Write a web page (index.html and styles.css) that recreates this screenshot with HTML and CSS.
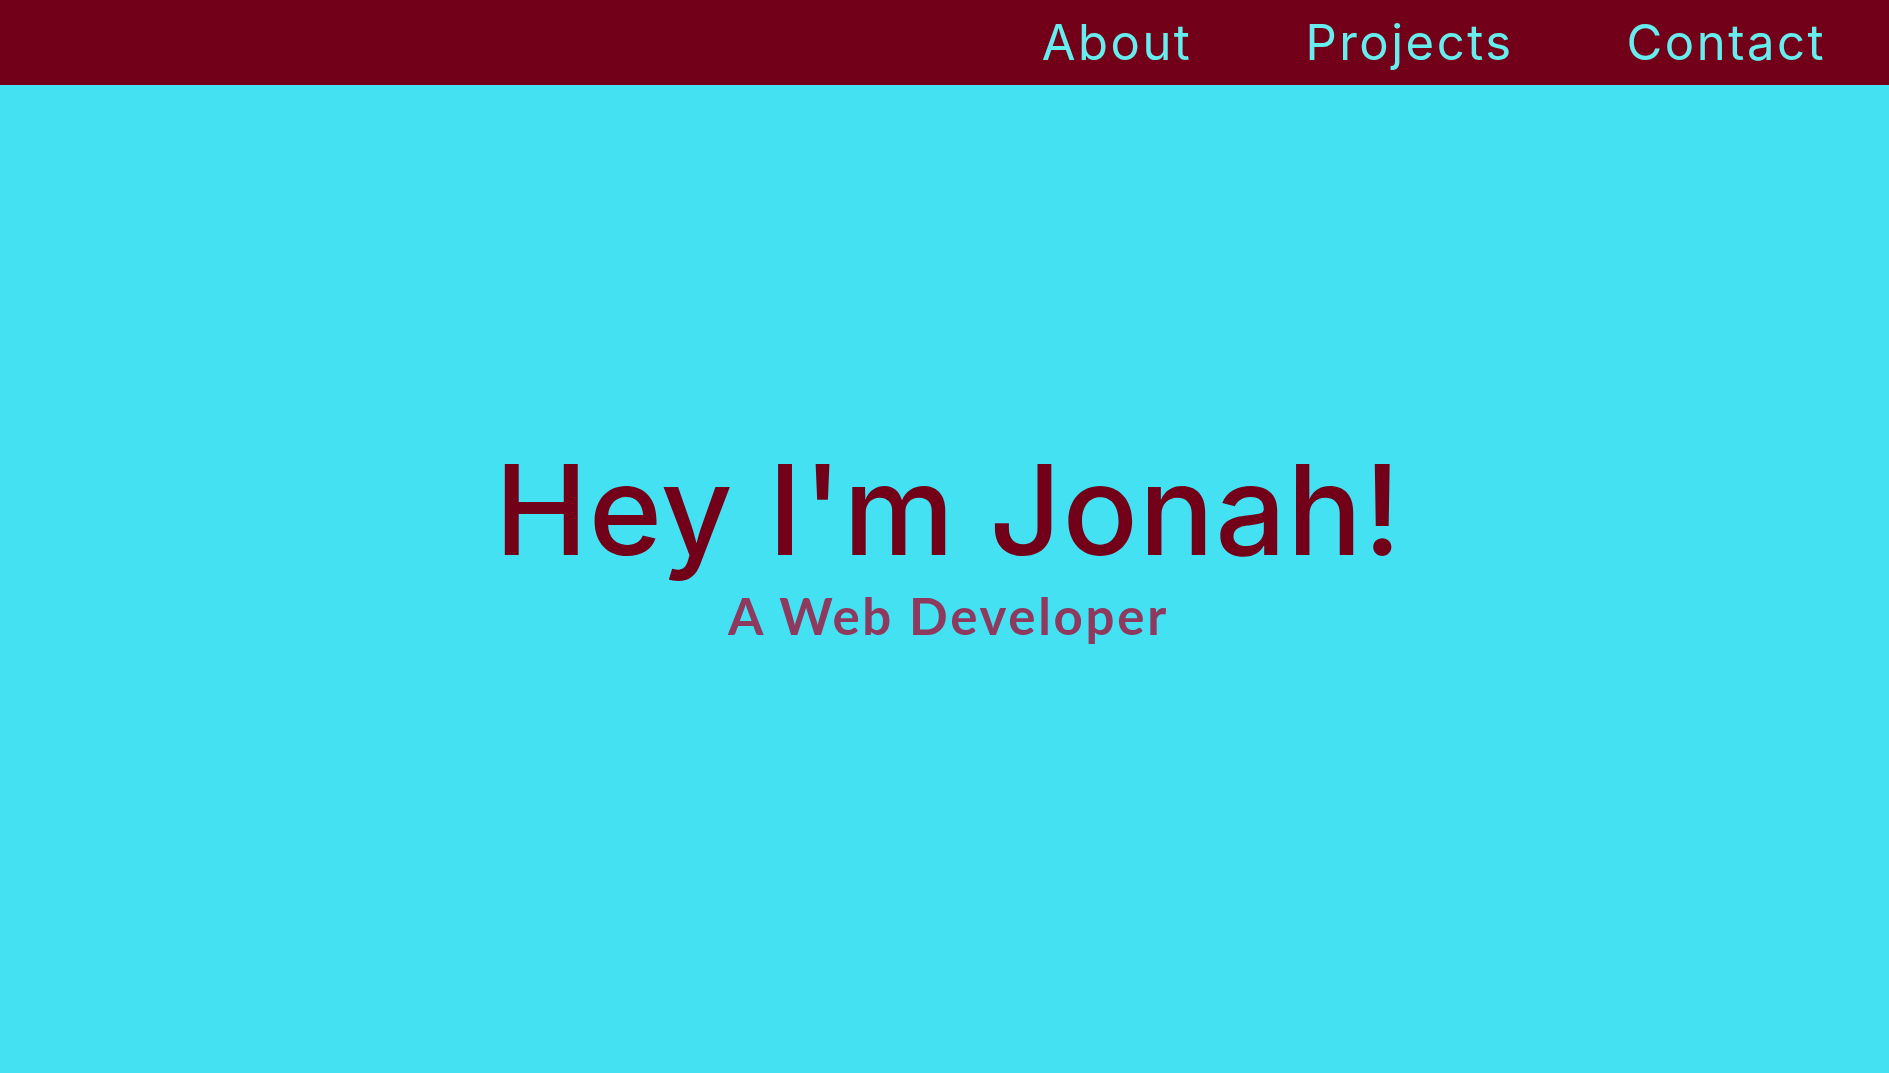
FILE: index.html
```html
<!DOCTYPE html>
<html lang="en">
<head>
<meta charset="utf-8">
<title>Jonah</title>
<link rel="stylesheet" href="styles.css">
</head>
<body>
<header class="nav">
  <a class="nav-link" href="#about">About</a>
  <a class="nav-link" href="#projects">Projects</a>
  <a class="nav-link" href="#contact">Contact</a>
</header>
<main class="hero">
  <h1 class="hero-title">Hey I'm Jonah!</h1>
  <h2 class="hero-sub">A Web Developer</h2>
</main>
</body>
</html>
```
FILE: styles.css
```css
html, body {
  margin: 0;
  padding: 0;
}
body {
  background: #44e1f2;
  font-family: Inter, "Open Sans", sans-serif;
  height: 100vh;
  display: flex;
  flex-direction: column;
  overflow: hidden;
}
.nav {
  height: 85px;
  flex: none;
  background: #730019;
  display: flex;
  justify-content: flex-end;
  align-items: center;
  gap: 113px;
  padding-right: 63px;
}
.nav-link {
  color: #66eeee;
  text-decoration: none;
  font-size: 49px;
  font-weight: 400;
  letter-spacing: 2.5px;
  line-height: 1;
}
.hero {
  flex: 1;
  display: flex;
  flex-direction: column;
  align-items: center;
  justify-content: center;
  padding-bottom: 76px;
  padding-left: 8px;
}
.hero-title {
  margin: 0;
  font-size: 125px;
  font-weight: 500;
  letter-spacing: 1px;
  line-height: 1.2;
  color: #730019;
}
.hero-sub {
  margin: 0;
  font-family: Lato, sans-serif;
  font-size: 51px;
  font-weight: 700;
  letter-spacing: 2.7px;
  line-height: 1.2;
  color: #8e3a5e;
}
```
